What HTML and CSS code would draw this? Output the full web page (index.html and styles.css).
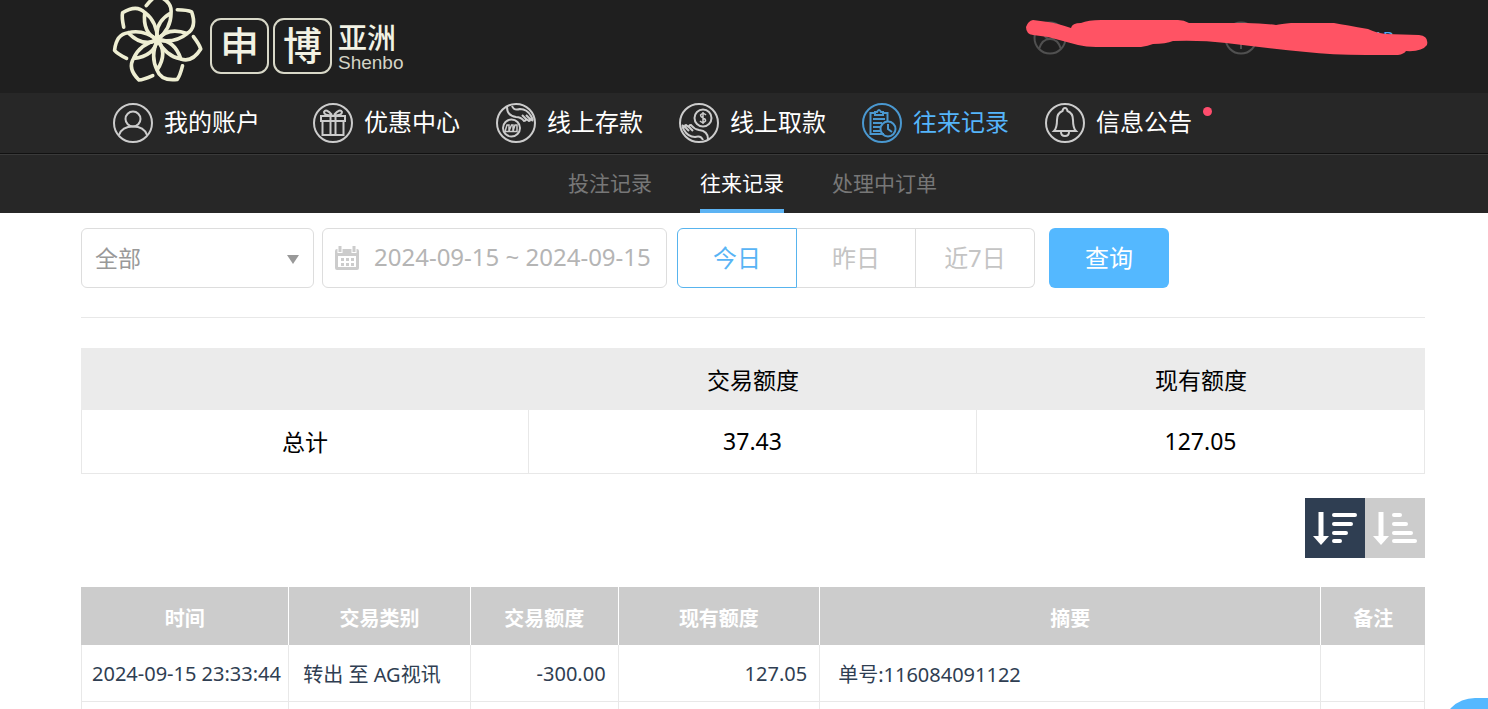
FILE: index.html
```html
<!DOCTYPE html>
<html lang="zh-CN">
<head>
  <meta charset="UTF-8" />
  <title>往来记录</title>
  <meta name="viewport" content="width=device-width, initial-scale=1.0" />
  <link rel="stylesheet" href="styles.css">
</head>
<body>

  <header class="top">
    <a class="logo" href="#">
      <svg class="logo-flower" viewBox="-138 -120 276 250" fill="none" stroke="#eeeed2" stroke-width="11" stroke-linecap="round" stroke-linejoin="round">
        <defs>
          <path id="petal" d="M-34 -104 Q-14 -128 -2 -134 Q45 -118 41 -82 Q42 -35 0 0 Q-12 -50 41 -82" />
        </defs>
        <use href="#petal" />
        <use href="#petal" transform="rotate(51.43)" />
        <use href="#petal" transform="rotate(102.86)" />
        <use href="#petal" transform="rotate(154.29)" />
        <use href="#petal" transform="rotate(205.71)" />
        <use href="#petal" transform="rotate(257.14)" />
        <use href="#petal" transform="rotate(308.57)" />
      </svg>
      <span class="logo-box">申</span>
      <span class="logo-box">博</span>
      <span class="logo-side">
        <span class="logo-cn">亚洲</span>
        <span class="logo-en">Shenbo</span>
      </span>
    </a>

    <div class="account">
      <svg class="account-icon" viewBox="0 0 34 34" fill="none" stroke="#505050" stroke-width="2">
        <circle cx="17" cy="17" r="15.5" />
        <circle cx="17" cy="12" r="6" />
        <path d="M6 28 Q9 18 17 18 Q25 18 28 28" />
      </svg>
      <svg class="account-icon" viewBox="0 0 34 34" fill="none" stroke="#505050" stroke-width="2">
        <circle cx="17" cy="17" r="15.5" />
        <path d="M10 8 L17 17 L24 8 M11 17 H23 M17 17 V28" />
      </svg>
      <a class="account-unit" href="#">AB</a>
      <svg class="marker" viewBox="0 0 402 36" fill="#ff5364">
        <path d="M7 0 Q2 1 0 7 Q0 14 7 15 L22 17 L52 25 Q60 27 70 27 H115 Q122 26 127 24 Q140 24 147 21 Q175 20 200 23 Q240 28 280 32 Q305 35 340 35 H372 Q378 34 380 31 Q396 32 401 25 Q403 16 393 15 L360 14 Q350 13 342 9 Q320 5 308 3 H265 Q255 4 250 5 Q235 3 220 3 H163 Q158 0 152 0 H75 Q62 0 55 3 Q46 3 45 8 Q30 3 22 2 Z" />
      </svg>
    </div>
  </header>

  <nav class="main-nav">
    <a class="nav-item first" href="#">
      <svg class="nav-icon" viewBox="0 0 40 40">
        <circle cx="20" cy="20" r="19" />
        <circle cx="20" cy="16" r="7.5" />
        <path d="M6 32 Q9 23.5 20 23.5 Q31 23.5 34 32" />
      </svg>
      我的账户
    </a>
    <a class="nav-item" href="#">
      <svg class="nav-icon" viewBox="0 0 40 40">
        <circle cx="20" cy="20" r="19" />
        <path d="M8 13 H32 V18 H8 Z M9.5 18 V32 H30.5 V18 M17.5 13 V32 M22.5 13 V32 M19 12 Q11 13 11 9 Q13 5 19 12 M21 12 Q29 13 29 9 Q27 5 21 12" />
      </svg>
      优惠中心
    </a>
    <a class="nav-item" href="#">
      <svg class="nav-icon" viewBox="0 0 40 40">
        <circle cx="20" cy="20" r="19" />
        <circle cx="15.5" cy="25" r="8.5" />
        <path stroke-width="1.5" d="M9 28.5 L11 22 H13 V28 L15.5 22 H17 V28 L19 22 H21 V28.5 Z" />
        <path d="M11 4 Q11 13 20 14 Q25 14 28 18 Q31 18 29 15 L26 12 M29 15 L33 18 Q35 18 33 15 L30 12 M33 15 L37 18 M16 3 Q18 8 24 6 Q31 6 35 13 L37 17" />
      </svg>
      线上存款
    </a>
    <a class="nav-item" href="#">
      <svg class="nav-icon" viewBox="0 0 40 40">
        <circle cx="20" cy="20" r="19" />
        <circle cx="24" cy="15" r="8.5" />
        <path stroke-width="1.5" d="M27 12 Q24 9 21.5 12 Q21.5 14 24 15 Q27 16 26.5 18 Q24 21 21 18 M24 9 V21" />
        <path d="M29 36 Q29 28 20 27 Q15 26 12 22 Q9 22 11 25 L14 28 M11 25 L7 22 Q5 22 7 25 L10 28 M7 25 L3 22 M24 37 Q22 32 16 34 Q9 34 5 27 L3 23" />
      </svg>
      线上取款
    </a>
    <a class="nav-item active" href="#">
      <svg class="nav-icon" viewBox="0 0 40 40">
        <circle cx="20" cy="20" r="19" />
        <path d="M22 31 H8.5 V10 H13 M21 10 H25.5 V18 M13 12 V9 H15 Q17 5 19 9 H21 V12 Z M11 16 H23 M11 20 H20 M11 24 H18 M11 28 H18" />
        <circle cx="26" cy="26" r="7.5" />
        <path d="M26 21 V26 L30 29" />
      </svg>
      往来记录
    </a>
    <a class="nav-item" href="#">
      <svg class="nav-icon" viewBox="0 0 40 40">
        <circle cx="20" cy="20" r="19" />
        <path d="M9 28 Q12 25 12 17 Q12 10 17.5 8 Q18 5 20 5 Q22 5 22.5 8 Q28 10 28 17 Q28 25 31 28 Z M16 29 Q16 33 20 33 Q24 33 24 29" />
      </svg>
      信息公告
      <span class="dot"></span>
    </a>
  </nav>

  <nav class="sub-nav">
    <a href="#">投注记录</a>
    <a class="active" href="#">往来记录</a>
    <a href="#">处理中订单</a>
  </nav>

  <main class="content">
    <form class="filters">
      <div class="select-wrap">
        <select aria-label="类别">
          <option>全部</option>
        </select>
      </div>
      <label class="date-box">
        <svg class="calendar" viewBox="0 0 26 26">
          <path fill="#ccc" fill-rule="evenodd" d="M3 4 H23 Q25 4 25 6 V23 Q25 25 23 25 H3 Q1 25 1 23 V6 Q1 4 3 4 Z M4 11 V22 H22 V11 Z" />
          <path stroke="#fff" stroke-width="5" d="M6 1 V8 M20 1 V8" />
          <path stroke="#ccc" stroke-width="3" d="M6 1 V7 M20 1 V7" />
          <path fill="none" stroke="#ccc" stroke-width="3" stroke-dasharray="3 2" d="M7 14.5 H20 M7 19.5 H20" />
        </svg>
        <input type="text" value="2024-09-15 ~ 2024-09-15" aria-label="日期" />
      </label>
      <div class="days">
        <button type="button" class="day selected">今日</button>
        <button type="button" class="day">昨日</button>
        <button type="button" class="day">近7日</button>
      </div>
      <button type="button" class="search-btn">查询</button>
    </form>

    <table class="summary">
      <thead>
        <tr>
          <th></th>
          <th>交易额度</th>
          <th>现有额度</th>
        </tr>
      </thead>
      <tbody>
        <tr>
          <td>总计</td>
          <td>37.43</td>
          <td>127.05</td>
        </tr>
      </tbody>
    </table>

    <div class="sort">
      <button type="button" class="sort-btn selected" aria-label="降序">
        <svg viewBox="0 0 60 60" stroke="#fff" fill="#fff">
          <path stroke-width="5" d="M16 14 V40" />
          <path stroke="none" d="M8 38 H24 L16 47 Z" />
          <path stroke-width="4" stroke-linecap="round" d="M29 17 H50 M29 26 H46 M29 35 H41 M29 43 H35" />
        </svg>
      </button>
      <button type="button" class="sort-btn" aria-label="升序">
        <svg viewBox="0 0 60 60" stroke="#fff" fill="#fff">
          <path stroke-width="5" d="M16 14 V40" />
          <path stroke="none" d="M8 38 H24 L16 47 Z" />
          <path stroke-width="4" stroke-linecap="round" d="M29 17 H35 M29 26 H41 M29 35 H46 M29 43 H50" />
        </svg>
      </button>
    </div>

    <table class="records">
      <thead>
        <tr>
          <th class="col-time">时间</th>
          <th class="col-type">交易类别</th>
          <th class="col-amount">交易额度</th>
          <th class="col-balance">现有额度</th>
          <th class="col-note">摘要</th>
          <th>备注</th>
        </tr>
      </thead>
      <tbody>
        <tr>
          <td class="time">2024-09-15 23:33:44</td>
          <td class="type">转出 至 AG视讯</td>
          <td class="num">-300.00</td>
          <td class="num">127.05</td>
          <td class="note">单号:116084091122</td>
          <td></td>
        </tr>
        <tr>
          <td></td>
          <td></td>
          <td></td>
          <td></td>
          <td></td>
          <td></td>
        </tr>
      </tbody>
    </table>
  </main>

  <button type="button" class="float-btn" aria-label="客服"></button>

</body>
</html>
```

FILE: styles.css
```css
* {
  box-sizing: border-box;
}

body {
  margin: 0;
  height: 100vh;
  overflow: hidden;
  background: #fff;
  color: #000;
  font-family: "Noto Sans", "Noto Sans CJK SC", sans-serif;
}

a {
  color: inherit;
  text-decoration: none;
}

button, input, select {
  font-family: inherit;
  margin: 0;
}

/* header */
.top {
  display: flex;
  justify-content: space-between;
  height: 93px;
  padding: 0 60px 0 112px;
  background: #1f1f1f;
}

.logo {
  display: flex;
  align-items: flex-start;
  color: #f2f2e4;
}

.logo-flower {
  width: 91px;
  height: 83px;
  margin-right: 7px;
}

.logo-box {
  width: 59px;
  height: 56px;
  margin: 18px 4px 0 0;
  border: 2px solid #d8d8c8;
  border-radius: 11px;
  font-size: 39px;
  line-height: 50px;
  font-weight: 500;
  text-align: center;
}

.logo-side {
  display: flex;
  flex-direction: column;
  margin: 20px 0 0 2px;
}

.logo-cn {
  font-family: "Noto Sans CJK SC", sans-serif;
  font-size: 29px;
  line-height: 32px;
  font-weight: 500;
}

.logo-en {
  color: #d4d4c6;
  font-family: "Liberation Sans", sans-serif;
  font-size: 19px;
  line-height: 22px;
}

.account {
  position: relative;
  display: flex;
  align-items: flex-start;
  width: 402px;
  padding: 21px 34px 0 7px;
}

.account-icon {
  width: 34px;
  height: 34px;
  margin-right: 157px;
}

.account-unit {
  margin-left: auto;
  color: #4fa8f5;
  font-family: "Liberation Sans", sans-serif;
  font-size: 16px;
  line-height: 36px;
}

.account-icon + .account-icon {
  margin-right: 0;
}

.marker {
  position: absolute;
  left: 0;
  top: 20px;
  width: 402px;
  height: 36px;
}

/* navigation */
.main-nav {
  display: flex;
  gap: 36px;
  height: 60px;
  padding-left: 113px;
  background: #272727;
  color: #fff;
}

.nav-item {
  position: relative;
  display: flex;
  align-items: flex-start;
  gap: 11px;
  font-size: 24px;
  line-height: 57px;
  white-space: nowrap;
}

.nav-item.first {
  margin-right: 17px;
}

.nav-item.active {
  color: #55b5fb;
}

.nav-icon {
  width: 40px;
  height: 40px;
  margin-top: 10px;
  fill: none;
  stroke: #ccc;
  stroke-width: 2;
}

.active .nav-icon {
  stroke: #4a98d0;
}

.dot {
  position: absolute;
  right: -20px;
  top: 14px;
  width: 9px;
  height: 9px;
  border-radius: 50%;
  background: #ff4d6d;
}

.sub-nav {
  display: flex;
  justify-content: center;
  gap: 48px;
  height: 60px;
  padding: 0 64px 0 81px;
  border-top: 1px solid #111;
  background: #272727;
  box-shadow: inset 0 1px #3a3a3a;
  color: #777;
  font-size: 21px;
  line-height: 58px;
}

.sub-nav .active {
  border-bottom: 4px solid #5cb3f3;
  color: #fff;
}

/* filters */
.content {
  padding: 15px 63px 0 81px;
}

.filters {
  display: flex;
  padding-bottom: 29px;
  border-bottom: 1px solid #e8e8e8;
}

.select-wrap {
  position: relative;
  width: 233px;
  margin-right: 8px;
}

.select-wrap::after {
  content: "";
  position: absolute;
  right: 15px;
  top: 27px;
  border: 6px solid transparent;
  border-top: 9px solid #999;
  border-bottom: 0;
  pointer-events: none;
}

.select-wrap select {
  appearance: none;
  width: 100%;
  height: 60px;
  padding: 0 13px;
  border: 1px solid #ddd;
  border-radius: 6px;
  background: #fff;
  color: #999;
  font-size: 23px;
}

.date-box {
  display: flex;
  align-items: center;
  width: 345px;
  height: 60px;
  margin-right: 10px;
  padding-left: 11px;
  border: 1px solid #ddd;
  border-radius: 6px;
}

.calendar {
  flex: none;
  width: 26px;
  height: 26px;
  margin-right: 14px;
}

.date-box input {
  flex: 1;
  min-width: 0;
  padding: 0 0 3px;
  border: 0;
  background: none;
  color: #b5b5b5;
  font-size: 24px;
}

.days {
  display: flex;
  margin-right: 14px;
}

.day {
  width: 119px;
  height: 60px;
  padding: 0 0 3px;
  border: 1px solid #ddd;
  border-left: 0;
  background: #fff;
  color: #c4c4c4;
  font-size: 24px;
}

.day:last-child {
  border-radius: 0 6px 6px 0;
}

.day.selected {
  width: 120px;
  border: 1px solid #58b4ee;
  border-radius: 6px 0 0 6px;
  color: #58b4f5;
}

.search-btn {
  width: 120px;
  height: 60px;
  padding: 0 0 3px;
  border: 0;
  border-radius: 6px;
  background: #54b8ff;
  color: #fff;
  font-size: 24px;
}

/* tables */
table {
  width: 100%;
  table-layout: fixed;
  border-collapse: separate;
  border-spacing: 0;
}

th, td {
  padding: 0;
}

td {
  border-right: 1px solid #e8e8e8;
  border-bottom: 1px solid #e8e8e8;
}

td:first-child {
  border-left: 1px solid #e8e8e8;
}

.summary {
  margin-top: 30px;
  font-size: 23px;
  text-align: center;
}

.summary th {
  height: 62px;
  padding-bottom: 1px;
  background: #ebebeb;
  font-weight: normal;
}

.summary td {
  height: 64px;
  padding-bottom: 2px;
}

.sort {
  display: flex;
  justify-content: flex-end;
  margin: 24px 0 29px;
}

.sort-btn {
  width: 60px;
  height: 60px;
  padding: 0;
  border: 0;
  background: #ccc;
}

.sort-btn.selected {
  background: #2f3e52;
}

.sort-btn svg {
  display: block;
}

.records {
  color: #2f3e52;
  font-size: 20px;
}

.records th {
  height: 58px;
  padding-top: 2px;
  border-right: 1px solid #fff;
  background: #ccc;
  color: #fff;
}

.records th:last-child {
  border-right: 0;
}

.records td {
  height: 57px;
  white-space: nowrap;
}

.col-time {
  width: 15.5%;
}

.col-type {
  width: 13.5%;
}

.col-amount {
  width: 11%;
}

.col-balance {
  width: 15%;
}

.col-note {
  width: 37.3%;
}

.records .time {
  padding-left: 10px;
}

.records .type {
  padding-left: 14px;
}

.records .num {
  padding-right: 12px;
  text-align: right;
}

.records .note {
  padding-left: 18px;
}

.float-btn {
  position: fixed;
  right: -40px;
  bottom: -57px;
  width: 87px;
  height: 68px;
  border: 0;
  border-radius: 34px;
  background: #54b8ff;
}
```
